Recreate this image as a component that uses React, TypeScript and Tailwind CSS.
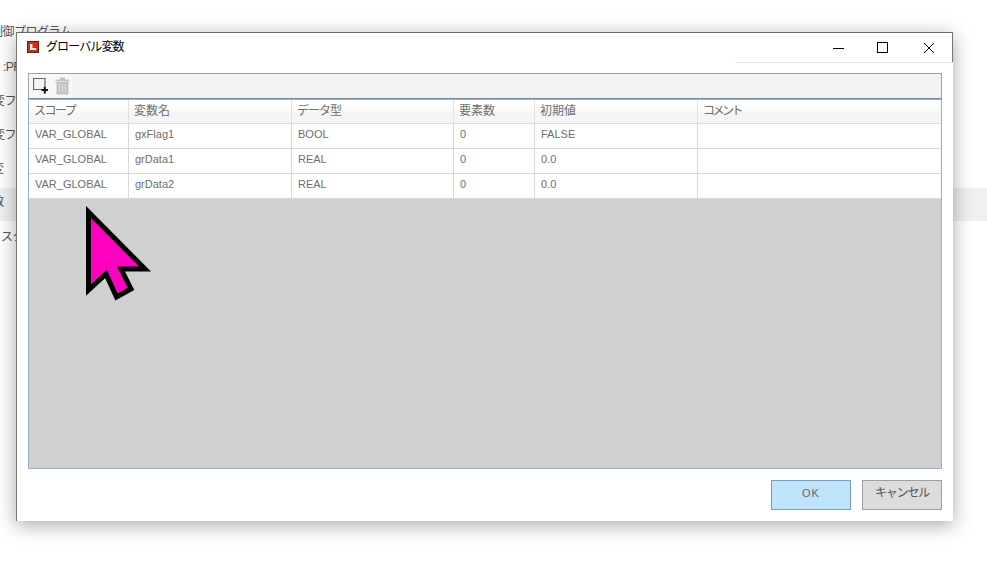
const cols = ['w-[100px]', 'w-[163px]', 'w-[162px]', 'w-[81px]', 'w-[163px]', 'flex-1']

const headers = [
  { label: 'スコープ', cls: 'tracking-[-1.5px]' },
  { label: '変数名', cls: '' },
  { label: 'データ型', cls: 'tracking-[-1px]' },
  { label: '要素数', cls: '' },
  { label: '初期値', cls: '' },
  { label: 'コメント', cls: 'tracking-[-2.5px] pl-[3px]' },
]

const rows = [
  ['VAR_GLOBAL', 'gxFlag1', 'BOOL', '0', 'FALSE', ''],
  ['VAR_GLOBAL', 'grData1', 'REAL', '0', '0.0', ''],
  ['VAR_GLOBAL', 'grData2', 'REAL', '0', '0.0', ''],
]

const sideItems = [
  { label: '制御プログラム', cls: 'top-[24px] left-[-9px]' },
  { label: ':PF', cls: 'top-[59px] left-[3px]' },
  { label: '変ファイル', cls: 'top-[93px] left-[-7px]' },
  { label: '変ファイル', cls: 'top-[127px] left-[-7px]' },
  { label: '変', cls: 'top-[161px] left-[-8px]' },
  { label: '数', cls: 'top-[194px] left-[-8px]' },
  { label: 'スタ', cls: 'top-[229px] left-[1px]' },
]

function LogoIcon() {
  return (
    <svg width="12" height="12" viewBox="0 0 12 12" className="mb-[1px] shrink-0">
      <rect x="0.5" y="0.5" width="11" height="11" fill="#d42a12" stroke="#7a1a0c" />
      <path d="M3 3h2.400v4h3.800v2H3z" fill="#fff" />
    </svg>
  )
}

function AddIcon() {
  return (
    <svg width="16" height="17" viewBox="0 0 16 17">
      <path d="M9 11.500H0.500V0.500H12V8" fill="#f4f4f4" stroke="#666" strokeWidth="1.200" />
      <path d="M8.500 12h6.500M11.750 8.500v7" stroke="#111" strokeWidth="2" fill="none" />
    </svg>
  )
}

function TrashIcon() {
  return (
    <svg width="15" height="18" viewBox="0 0 15 18">
      <path d="M0.500 2.500h14v2h-14zM5 0.500h5v2H5z" fill="#c2c2c2" />
      <path d="M1.500 5h12v12.500h-12z" fill="#c2c2c2" />
      <path d="M4.500 7v8.500M7.500 7v8.500M10.500 7v8.500" stroke="#dedede" strokeWidth="1" />
    </svg>
  )
}

function Cursor() {
  return (
    <svg width="72" height="100" viewBox="0 0 72 100" className="absolute left-[82px] top-[204px]">
      <path
        d="M6.500 8 L63 65 L39 65 L49 85 L34.500 93 L24 70 L6.500 86 Z"
        fill="#ff00c0"
        stroke="#000"
        strokeWidth="5"
      />
    </svg>
  )
}

export default function App() {
  return (
    <div className="relative h-[564px] w-[987px] overflow-hidden bg-white font-['Liberation_Sans','Noto_Sans_CJK_JP',sans-serif]">
      {/* ウィンドウの裏側 */}
      <div className="absolute left-0 right-0 top-[188px] h-[33px] bg-[#f0f0f0]" />
      {sideItems.map((item) => (
        <div key={item.cls} className={`absolute whitespace-nowrap text-[12px] leading-[16px] tracking-[-0.5px] text-[#555] ${item.cls}`}>
          {item.label}
        </div>
      ))}

      <div className="absolute left-[16px] top-[32px] flex h-[489px] w-[937px] flex-col border-l border-[#777] bg-white shadow-[0_4px_18px_rgba(0,0,0,0.35)]">
        <div className="flex h-[30px] shrink-0 items-center border-t border-r border-r-[#777] border-t-[#666] pl-[10px]">
          <LogoIcon />
          <span className="mb-[2px] ml-[7px] text-[12px] tracking-[-0.9px] text-black">グローバル変数</span>
          <div className="ml-auto flex items-center text-black">
            <svg width="12" height="12" viewBox="0 0 12 12" className="mr-[33px]"><path d="M1 6.500h11" stroke="#000" /></svg>
            <svg width="11" height="11" viewBox="0 0 11 11" className="mr-[35px]"><rect x="0.500" y="0.500" width="10" height="10" fill="none" stroke="#000" /></svg>
            <svg width="12" height="12" viewBox="0 0 12 12" className="mr-[17px]"><path d="M1 1l10 10M11 1L1 11" stroke="#000" fill="none" /></svg>
          </div>
        </div>
        <div className="flex h-[1px] shrink-0 justify-end">
          <div className="h-[1px] w-[218px] bg-[#e6e6e6]" />
        </div>

        <div className="ml-[11px] mr-[11px] mt-[10px] flex min-h-0 flex-1 flex-col">
          <div className="flex h-[26px] shrink-0 border border-[#a0a0a0] border-b-[#888] bg-[#f2f2f2]">
            <div className="flex w-[43px] items-center gap-[6px] bg-[#f8f8f8] pl-[4px]">
              <AddIcon />
              <TrashIcon />
            </div>
          </div>
          <div className="flex min-h-0 flex-1 flex-col border border-[#8fb1d3] bg-[#d0d0d0]">
            <div className="flex h-[24px] shrink-0 border-b border-[#dcdcdc] bg-[linear-gradient(#ffffff_30%,#f3f5f7_60%,#f3f5f7)]">
              {headers.map((h, i) => (
                <div key={h.label} className={`${cols[i]} flex items-center border-r border-[#e2e2e2] pb-[1px] pl-[5px] text-[12px] text-[#6e6e6e] last:border-r-0 ${h.cls}`}>
                  {h.label}
                </div>
              ))}
            </div>
            {rows.map((row) => (
              <div key={row[1]} className="flex h-[25px] shrink-0 border-b border-[#d8d8d8] bg-white">
                {row.map((cell, i) => (
                  <div key={i} className={`${cols[i]} flex items-center border-r border-[#d8d8d8] pb-[3px] pl-[6px] text-[11px] text-[#6e6e6e] last:border-r-0`}>
                    {cell}
                  </div>
                ))}
              </div>
            ))}
          </div>
          <div className="flex h-[52px] shrink-0 items-start justify-end gap-[11px] pt-[11px]">
            <button className="h-[30px] w-[80px] border border-[#6f9fd0] bg-[#bfe3fb] pb-[4px] text-[11px] tracking-[1px] text-[#666]">OK</button>
            <button className="h-[30px] w-[80px] border border-[#a0a0a0] bg-[#dcdcdc] pb-[4px] text-[12px] tracking-[-1.2px] text-[#555]">キャンセル</button>
          </div>
        </div>
      </div>

      <Cursor />
    </div>
  )
}
